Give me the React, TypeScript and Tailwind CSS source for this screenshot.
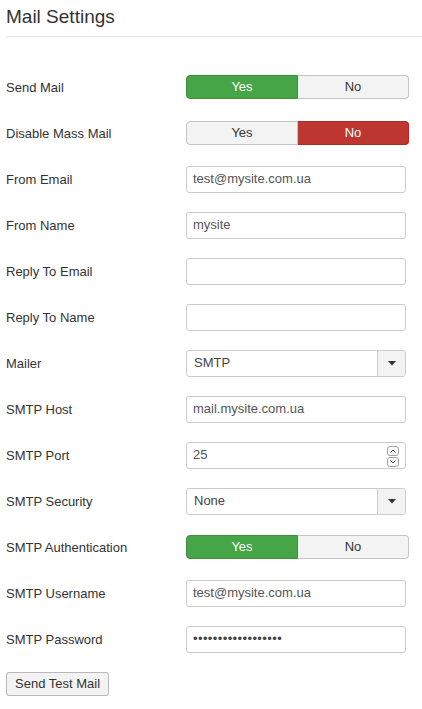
import React from "react";

function Toggle({ yes, variant }: { yes: boolean; variant: "green" | "red" }) {
  const activeYes = yes;
  return (
    <div className="flex w-[223px] h-[24px] text-[13px]">
      <div
        className={
          activeYes
            ? "flex-1 flex items-center justify-center rounded-l-[4px] border border-[#3d8f3d] bg-[#46a546] text-white"
            : "flex-1 flex items-center justify-center rounded-l-[4px] border border-[#c4c4c4] bg-[#f3f3f3] text-[#333]"
        }
      >
        Yes
      </div>
      <div
        className={
          !activeYes && variant === "red"
            ? "flex-1 flex items-center justify-center rounded-r-[4px] border border-l-0 border-[#a52f29] bg-[#bd362f] text-white"
            : "flex-1 flex items-center justify-center rounded-r-[4px] border border-l-0 border-[#c4c4c4] bg-[#f3f3f3] text-[#333]"
        }
      >
        No
      </div>
    </div>
  );
}

function TextBox({ value, children }: { value?: string; children?: React.ReactNode }) {
  return (
    <div className="relative flex items-center w-[220px] h-[27px] rounded-[3px] border border-[#cccccc] bg-white px-[6px] text-[13px] text-[#555]">
      {value}
      {children}
    </div>
  );
}

function SelectBox({ value }: { value: string }) {
  return (
    <div className="flex w-[220px] h-[27px] rounded-[3px] border border-[#cccccc] bg-white text-[13px] text-[#444] overflow-hidden">
      <div className="flex-1 flex items-center px-[7px]">{value}</div>
      <div className="w-[28px] flex items-center justify-center border-l border-[#cccccc] bg-[#f3f3f3]">
        <svg width="8" height="5" viewBox="0 0 8 5">
          <path d="M0 0 L8 0 L4 4.5 Z" fill="#333" />
        </svg>
      </div>
    </div>
  );
}

function Spinner() {
  return (
    <div className="absolute right-[6px] top-[3px] flex flex-col gap-[1px]">
      <div className="w-[12px] h-[10px] rounded-[3px] border border-[#a0a0a0] flex items-center justify-center bg-white">
        <svg width="6" height="4" viewBox="0 0 6 4">
          <path d="M0.5 3.5 L3 1 L5.5 3.5" stroke="#444" strokeWidth="1" fill="none" />
        </svg>
      </div>
      <div className="w-[12px] h-[10px] rounded-[3px] border border-[#a0a0a0] flex items-center justify-center bg-white">
        <svg width="6" height="4" viewBox="0 0 6 4">
          <path d="M0.5 0.5 L3 3 L5.5 0.5" stroke="#444" strokeWidth="1" fill="none" />
        </svg>
      </div>
    </div>
  );
}

function Row({ label, children }: { label: string; children: React.ReactNode }) {
  return (
    <div className="flex items-center h-[46px]">
      <div className="w-[180px] pt-[2px] text-[13px] text-[#333]">{label}</div>
      {children}
    </div>
  );
}

export default function App() {
  return (
    <div
      className="bg-white min-h-[709px] pl-[6px] text-[#333]"
      style={{ fontFamily: '"Liberation Sans", Arial, sans-serif' }}
    >
      <div className="pt-[5px] h-[36px] text-[19px] leading-[24px] text-[#333]">Mail Settings</div>
      <div className="h-px bg-[#e5e5e5] mb-[27px]" />
      <Row label="Send Mail">
        <Toggle yes={true} variant="green" />
      </Row>
      <Row label="Disable Mass Mail">
        <Toggle yes={false} variant="red" />
      </Row>
      <Row label="From Email">
        <TextBox value="test@mysite.com.ua" />
      </Row>
      <Row label="From Name">
        <TextBox value="mysite" />
      </Row>
      <Row label="Reply To Email">
        <TextBox />
      </Row>
      <Row label="Reply To Name">
        <TextBox />
      </Row>
      <Row label="Mailer">
        <SelectBox value="SMTP" />
      </Row>
      <Row label="SMTP Host">
        <TextBox value="mail.mysite.com.ua" />
      </Row>
      <Row label="SMTP Port">
        <TextBox value="25">
          <Spinner />
        </TextBox>
      </Row>
      <Row label="SMTP Security">
        <SelectBox value="None" />
      </Row>
      <Row label="SMTP Authentication">
        <Toggle yes={true} variant="green" />
      </Row>
      <Row label="SMTP Username">
        <TextBox value="test@mysite.com.ua" />
      </Row>
      <Row label="SMTP Password">
        <TextBox>
          <span className="text-[#444] text-[13px] tracking-[0.4px]">••••••••••••••••••</span>
        </TextBox>
      </Row>
      <div className="mt-[9px]">
        <div className="inline-flex items-center h-[24px] px-[8px] rounded-[3px] border border-[#b8b8b8] bg-[#f3f3f3] text-[13px] text-[#333]">
          Send Test Mail
        </div>
      </div>
    </div>
  );
}
